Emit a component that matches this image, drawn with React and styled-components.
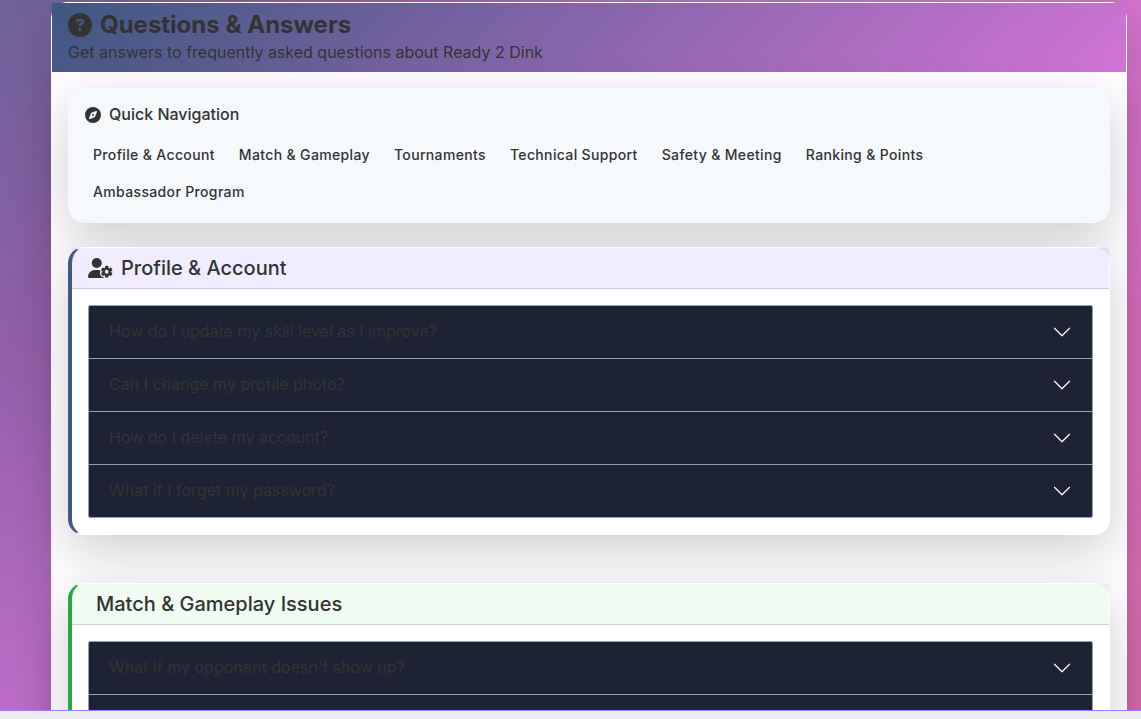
import React from "react";
import styled, { createGlobalStyle } from "styled-components";
import { FaCircleQuestion, FaCompass, FaUserGear } from "react-icons/fa6";

const GlobalStyle = createGlobalStyle`
  *, *::before, *::after { box-sizing: border-box; }
  body {
    margin: 0;
    color: #333;
    font-family: Inter, "Liberation Sans", sans-serif;
    font-size: 16px;
    line-height: 24px;
  }
`;

const Shell = styled.div`
  display: flex;
  flex-direction: column;
  height: 100vh;
  background: linear-gradient(135deg, #6c629a 0%, #915fa8 19%, #bb6ec7 38%, #d472cd 62%, #da6dac 100%);
`;

const Scroller = styled.div`
  flex: 1;
  min-height: 0;
  overflow: hidden;
  padding: 2px 14px 0 51px;
`;

const BottomNav = styled.nav`
  height: 9px;
  flex-shrink: 0;
  border-top: 1px solid #9d7ffb;
  background: #ebeced;
`;

const Page = styled.main`
  border: 1px solid #fff;
  border-radius: 16px;
  background: #fefcff;
  box-shadow: 0 16px 48px rgba(0, 0, 0, 0.175);
`;

const Hero = styled.header`
  padding: 7px 16px 8px;
  border-radius: 2px 2px 0 0;
  background: linear-gradient(135deg, #3f5781 0%, #d174d5 100%);
`;

const HeroTitle = styled.h1`
  display: flex;
  align-items: center;
  gap: 8px;
  margin: 0 0 1px;
  font-size: 24px;
  font-weight: 700;
  line-height: 29px;
`;

const HeroText = styled.p`
  margin: 0;
`;

const Content = styled.div`
  padding: 16px;
`;

const Card = styled.section`
  border: 1px solid #fff;
  border-radius: 16px;
  background: #fff;
  box-shadow: 0 16px 48px rgba(0, 0, 0, 0.175);
`;

const NavCard = styled(Card)`
  margin-bottom: 24px;
  padding: 16px 16px 12px;
  border-color: #f5f9fc;
  background: #f5f9fc;
`;

const NavTitle = styled.h2`
  display: flex;
  align-items: center;
  gap: 8px;
  margin: 0 0 12px;
  font-size: 16px;
  font-weight: 500;
  line-height: 19px;
`;

const NavLinks = styled.nav`
  display: flex;
  flex-wrap: wrap;
  column-gap: 8px;
`;

const NavLink = styled.a`
  padding: 8px;
  color: inherit;
  font-size: 14px;
  font-weight: 500;
  line-height: 21px;
  letter-spacing: 0.025em;
  text-decoration: none;
`;

const TopicCard = styled(Card)`
  margin-bottom: 48px;
  border-left: 4px solid ${(p) => p.$accent};
`;

const TopicHeader = styled.header`
  padding: 8px 16px;
  border-bottom: 1px solid rgba(30, 20, 80, 0.18);
  border-radius: 2px 2px 0 0;
  background: ${(p) => p.$tint};
`;

const TopicTitle = styled.h2`
  display: flex;
  align-items: center;
  gap: 8px;
  margin: 0;
  font-size: 20px;
  font-weight: 500;
  line-height: 24px;
`;

const TopicIcon = styled.span`
  display: flex;

  svg {
    width: 25px;
    height: 20px;
  }
`;

const TopicBody = styled.div`
  padding: 16px;
`;

const Accordion = styled.div`
  overflow: hidden;
  border: 1px solid #94a0b4;
  border-radius: 2px;
`;

const Question = styled.button`
  display: flex;
  align-items: flex-start;
  justify-content: space-between;
  width: 100%;
  padding: 16px 20px;
  border: 0;
  background: #1d2333;
  color: #333;
  font: inherit;
  line-height: 18px;
  text-align: left;
  cursor: pointer;

  & + & {
    border-top: 1px solid #94a0b4;
  }
`;

const QuestionText = styled.span`
  flex: 1;
`;

const Chevron = () => (
  <svg width="20" height="20" viewBox="0 0 16 16" fill="#f4f6f9" aria-hidden="true">
    <path
      fillRule="evenodd"
      d="M1.646 4.646a.5.5 0 0 1 .708 0L8 10.293l5.646-5.647a.5.5 0 0 1 .708.708l-6 6a.5.5 0 0 1-.708 0l-6-6a.5.5 0 0 1 0-.708z"
    />
  </svg>
);

const links = [
  "Profile & Account",
  "Match & Gameplay",
  "Tournaments",
  "Technical Support",
  "Safety & Meeting",
  "Ranking & Points",
  "Ambassador Program",
];

const topics = [
  {
    title: "Profile & Account",
    icon: <FaUserGear />,
    accent: "#405882",
    tint: "rgba(120, 80, 255, 0.1)",
    questions: [
      "How do I update my skill level as I improve?",
      "Can I change my profile photo?",
      "How do I delete my account?",
      "What if I forget my password?",
    ],
  },
  {
    title: "Match & Gameplay Issues",
    accent: "#28a745",
    tint: "rgba(105, 215, 120, 0.1)",
    questions: ["What if my opponent doesn't show up?", ""],
  },
];

export default function App() {
  return (
    <Shell>
      <GlobalStyle />
      <Scroller>
        <Page>
          <Hero>
            <HeroTitle>
              <FaCircleQuestion />
              Questions &amp; Answers
            </HeroTitle>
            <HeroText>Get answers to frequently asked questions about Ready 2 Dink</HeroText>
          </Hero>
          <Content>
            <NavCard>
              <NavTitle>
                <FaCompass />
                Quick Navigation
              </NavTitle>
              <NavLinks aria-label="Quick Navigation">
                {links.map((label) => (
                  <NavLink key={label} href="#">
                    {label}
                  </NavLink>
                ))}
              </NavLinks>
            </NavCard>
            {topics.map((topic) => (
              <TopicCard key={topic.title} $accent={topic.accent}>
                <TopicHeader $tint={topic.tint}>
                  <TopicTitle>
                    <TopicIcon>{topic.icon}</TopicIcon>
                    {topic.title}
                  </TopicTitle>
                </TopicHeader>
                <TopicBody>
                  <Accordion>
                    {topic.questions.map((question) => (
                      <Question
                        key={question}
                        type="button"
                        aria-expanded="false"
                        aria-label={question || "Next question"}
                      >
                        <QuestionText>{question}</QuestionText>
                        <Chevron />
                      </Question>
                    ))}
                  </Accordion>
                </TopicBody>
              </TopicCard>
            ))}
          </Content>
        </Page>
      </Scroller>
      <BottomNav />
    </Shell>
  );
}
